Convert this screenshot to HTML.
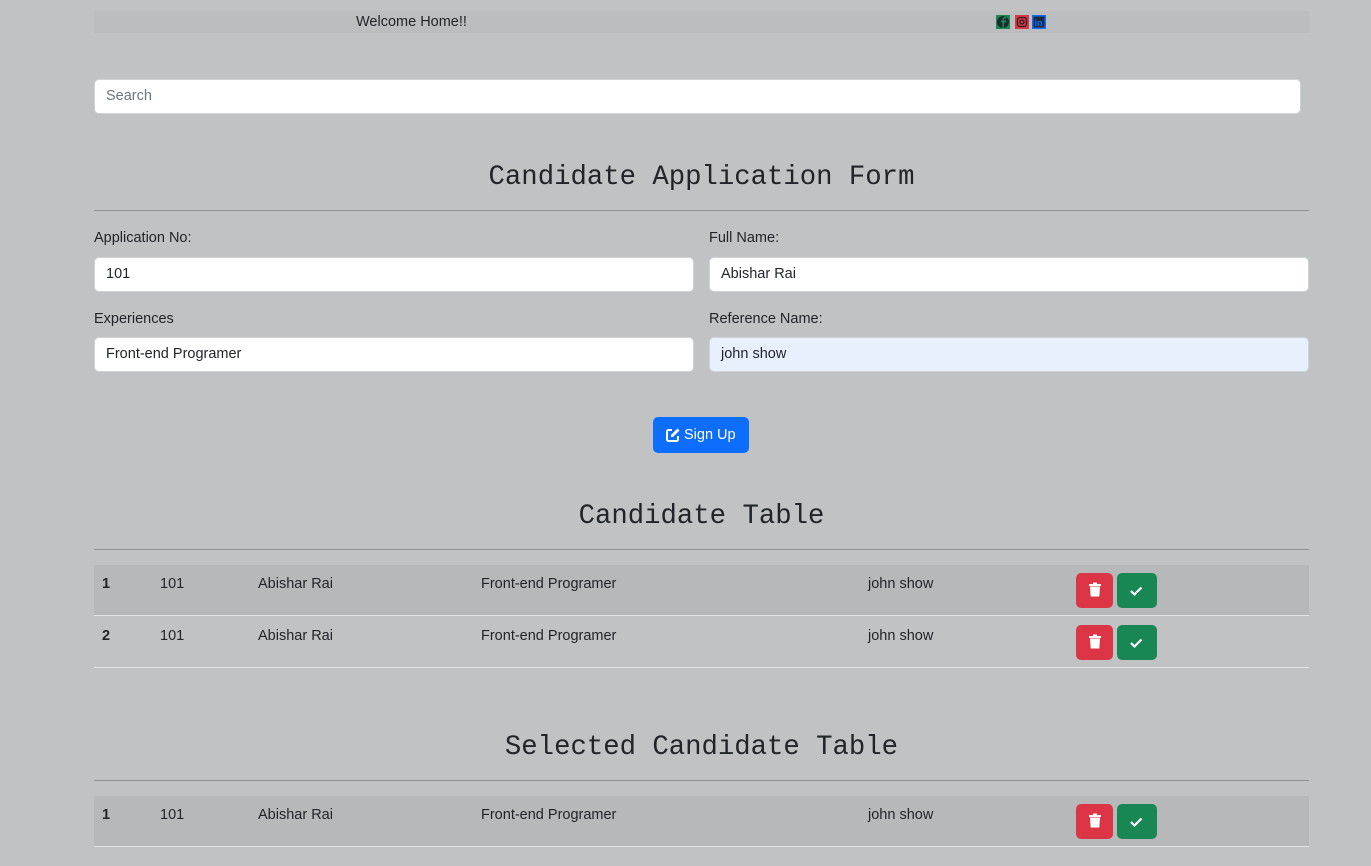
<!DOCTYPE html>
<html><head><meta charset="utf-8"><style>
*{box-sizing:border-box;margin:0;padding:0}
body{width:1371px;height:866px;background:#c1c2c4;font-family:"Liberation Sans",sans-serif;color:#212529;position:relative;overflow:hidden;font-size:14.5px}
.abs{position:absolute}
.hdr{left:94px;top:11px;width:1215px;height:22px;background:#bcbdbf}
.inp{position:absolute;height:35px;background:#fff;border:1px solid #d0d3d6;border-radius:5px;padding-left:11px;line-height:33px;font-size:14.5px;color:#212529}
h2{position:absolute;left:94px;width:1215px;text-align:center;font-family:"Liberation Mono",monospace;font-weight:400;font-size:27.3px;color:#212529}
.hr{position:absolute;left:94px;width:1215px;height:1px;background:#8f9193}
.lbl{position:absolute;font-size:14.5px}
.row{position:absolute;left:94px;width:1215px;height:51px;border-bottom:1px solid #e3e4e6}
.row span{position:absolute;top:11px;font-size:14.5px}
.btn{position:absolute;top:8px;height:35px;border-radius:5px}
.del{left:982px;width:37px;background:#dc3545}
.ok{left:1023px;width:40px;background:#198754}
</style></head><body>
<div class="abs hdr"></div>
<div class="abs" style="left:356px;top:14px">Welcome Home!!</div>
<svg class="abs" style="left:996px;top:14px" width="50" height="16">
<rect x="0" y="1" width="14" height="14" fill="#198754"/><circle cx="7" cy="8" r="6" fill="#1b2a2f"/><path d="M8 14V8.5h2l.3-2H8V5.5c0-.6.3-1 1-1h1.2V2.8H9c-1.6 0-2.5 1-2.5 2.6v1.1H5v2h1.5V14z" fill="#198754"/>
<rect x="19" y="1" width="14" height="14" fill="#dc3545"/><rect x="21.5" y="3.5" width="9" height="9" rx="2.5" fill="none" stroke="#222" stroke-width="1.3"/><circle cx="26" cy="8" r="2" fill="none" stroke="#222" stroke-width="1.3"/>
<rect x="36" y="1" width="14" height="14" fill="#0d6efd"/><rect x="37.5" y="2.5" width="11" height="11" fill="#1b2a3f"/><text x="38.5" y="12" font-size="9" font-weight="bold" fill="#0d6efd" font-family="Liberation Sans">in</text>
</svg>
<div class="inp" style="left:94px;top:79px;width:1207px;color:#6c757d">Search</div>
<h2 style="top:162px">Candidate Application Form</h2>
<div class="hr" style="top:210px"></div>
<div class="lbl" style="left:94px;top:230px">Application No:</div>
<div class="lbl" style="left:709px;top:230px">Full Name:</div>
<div class="inp" style="left:94px;top:257px;width:600px">101</div>
<div class="inp" style="left:709px;top:257px;width:600px">Abishar Rai</div>
<div class="lbl" style="left:94px;top:311px">Experiences</div>
<div class="lbl" style="left:709px;top:311px">Reference Name:</div>
<div class="inp" style="left:94px;top:337px;width:600px">Front-end Programer</div>
<div class="inp" style="left:709px;top:337px;width:600px;background:#e8f0fe">john show</div>
<div class="abs" style="left:653px;top:417px;width:96px;height:36px;background:#0d6efd;border-radius:5px;color:#fff;line-height:37px;padding-left:31px">Sign Up</div>
<svg class="abs" style="left:665px;top:427px" width="16" height="16" viewBox="0 0 16 16"><path d="M7 3H3.5A1.5 1.5 0 0 0 2 4.5v8A1.5 1.5 0 0 0 3.5 14h8a1.5 1.5 0 0 0 1.5-1.5V9" fill="none" stroke="#fff" stroke-width="2"/><path d="M12.5 1.5l2 2L8 10H6V8z" fill="#fff"/></svg>
<h2 style="top:501px">Candidate Table</h2>
<div class="hr" style="top:549px"></div>
<div class="row" style="top:565px;background:#b7b8ba"><span style="left:8px;font-weight:bold">1</span><span style="left:66px">101</span><span style="left:164px">Abishar Rai</span><span style="left:387px">Front-end Programer</span><span style="left:774px">john show</span><div class="btn del"></div><div class="btn ok"></div></div>
<div class="row" style="top:617px"><span style="left:8px;font-weight:bold">2</span><span style="left:66px">101</span><span style="left:164px">Abishar Rai</span><span style="left:387px">Front-end Programer</span><span style="left:774px">john show</span><div class="btn del"></div><div class="btn ok"></div></div>
<h2 style="top:732px">Selected Candidate Table</h2>
<div class="hr" style="top:780px"></div>
<div class="row" style="top:796px;background:#b7b8ba"><span style="left:8px;font-weight:bold">1</span><span style="left:66px">101</span><span style="left:164px">Abishar Rai</span><span style="left:387px">Front-end Programer</span><span style="left:774px">john show</span><div class="btn del"></div><div class="btn ok"></div></div>
<svg width="0" height="0" style="position:absolute"><defs>
<g id="tr"><rect x="-6" y="-6" width="12" height="2" fill="#fff"/><rect x="-2" y="-7.5" width="4" height="2" fill="#fff"/><path d="M-5-3.5h10l-.7 10h-8.6z" fill="#fff"/></g>
<g id="ck"><path d="M-6 0l3.5 3.5 7-7" fill="none" stroke="#fff" stroke-width="2.2"/></g></defs></svg>
<svg class="abs" style="left:0;top:0" width="1371" height="866">
<use href="#tr" x="1095" y="590"/><use href="#ck" x="1137" y="591"/>
<use href="#tr" x="1095" y="642"/><use href="#ck" x="1137" y="643"/>
<use href="#tr" x="1095" y="821"/><use href="#ck" x="1137" y="822"/>
</svg>
</body></html>
